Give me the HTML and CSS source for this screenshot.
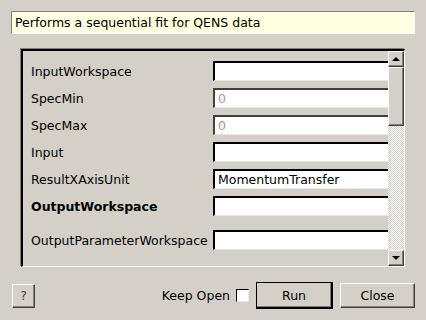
FILE: index.html
```html
<!DOCTYPE html>
<html lang="en">
<head>
    <meta charset="UTF-8">
    <title>PlotPeakByLogValue</title>
    <link rel="stylesheet" href="styles.css">
</head>
<body>
    <div class="dialog">
        <div class="description">Performs a sequential fit for QENS data</div>
        <div class="frame">
            <div class="props">
                <div class="row">
                    <span class="name">InputWorkspace</span>
                    <input class="field" type="text" value="">
                </div>
                <div class="row">
                    <span class="name">SpecMin</span>
                    <input class="field" type="text" value="0" disabled>
                </div>
                <div class="row">
                    <span class="name">SpecMax</span>
                    <input class="field" type="text" value="0" disabled>
                </div>
                <div class="row">
                    <span class="name">Input</span>
                    <input class="field" type="text" value="">
                </div>
                <div class="row">
                    <span class="name">ResultXAxisUnit</span>
                    <input class="field" type="text" value="MomentumTransfer">
                </div>
                <div class="row row-mandatory">
                    <span class="name bold">OutputWorkspace</span>
                    <input class="field" type="text" value="">
                </div>
                <div class="row row-last">
                    <span class="name">OutputParameterWorkspace</span>
                    <input class="field" type="text" value="">
                </div>
            </div>
            <div class="scrollbar">
                <div class="arrow arrow-up"></div>
                <div class="thumb"></div>
                <div class="track"></div>
                <div class="arrow arrow-down"></div>
            </div>
        </div>
        <div class="buttons">
            <button type="button" class="btn help">?</button>
            <label class="keep-open">
                <span>Keep Open</span>
                <span class="check"></span>
            </label>
            <button type="button" class="btn run">Run</button>
            <button type="button" class="btn close">Close</button>
        </div>
    </div>
</body>
</html>
```

FILE: styles.css
```css
body, html {
    margin: 0;
    background-color: #d4d0c8;
    font-family: "DejaVu Sans", sans-serif;
    font-size: 12.5px;
    color: #000;
}
.dialog {
    width: 426px;
    height: 320px;
    padding-top: 11px;
    box-sizing: border-box;
}
.description {
    margin-left: 11px;
    width: 404px;
    height: 23px;
    box-sizing: border-box;
    background-color: #ffffe1;
    border-top: 1px solid #808080;
    border-left: 1px solid #808080;
    border-bottom: 1px solid #fff;
    border-right: 1px solid #fff;
    padding-left: 3px;
    line-height: 21px;
}
.frame {
    display: flex;
    margin-left: 21px;
    margin-top: 15px;
    width: 384px;
    height: 218px;
    box-sizing: border-box;
    border-top: 2px solid #000;
    border-left: 2px solid #000;
    border-bottom: 1px solid #fff;
    border-right: 1px solid #fff;
    box-shadow: -1px -1px 0 #808080;
}
.props {
    flex: 1;
    overflow: hidden;
    padding: 10px 0 0 8px;
}
.row {
    display: flex;
    align-items: center;
    height: 20px;
    margin-bottom: 7px;
}
.row-mandatory {
    margin-top: 2px;
    margin-bottom: 14px;
}
.row-last {
    margin-top: 1px;
}
.name {
    width: 182px;
    flex-shrink: 0;
}
.bold {
    font-weight: bold;
}
.field {
    flex-shrink: 0;
    width: 190px;
    height: 20px;
    box-sizing: border-box;
    margin: 0;
    padding: 0 3px;
    font-family: "DejaVu Sans", sans-serif;
    font-size: 12.5px;
    color: #000;
    background-color: #fff;
    border-style: solid;
    border-width: 2px 0 1px 2px;
    border-color: #000 #e8e6e0 #e8e6e0 #000;
    outline: none;
}
.field:disabled {
    color: #9a9a9a;
    border-color: #404040 #e8e6e0 #e8e6e0 #404040;
}
.scrollbar {
    width: 16px;
    display: flex;
    flex-direction: column;
}
.arrow {
    height: 16px;
    box-sizing: border-box;
    border-top: 1px solid #fff;
    border-left: 1px solid #fff;
    border-bottom: 1px solid #404040;
    border-right: 1px solid #404040;
    box-shadow: inset -1px -1px 0 #808080;
    background-color: #d4d0c8;
    display: flex;
    align-items: center;
    justify-content: center;
}
.arrow::before {
    content: "";
    width: 0;
    height: 0;
    border-left: 4px solid transparent;
    border-right: 4px solid transparent;
}
.arrow-up::before {
    border-bottom: 4px solid #000;
}
.arrow-down::before {
    border-top: 4px solid #000;
}
.thumb {
    height: 59px;
    box-sizing: border-box;
    background-color: #d4d0c8;
    border-top: 1px solid #fff;
    border-left: 1px solid #fff;
    border-bottom: 1px solid #404040;
    border-right: 1px solid #404040;
    box-shadow: inset -1px -1px 0 #808080;
}
.track {
    flex: 1;
    background: repeating-conic-gradient(#fff 0 25%, #d4d0c8 0 50%) 0 0 / 2px 2px;
}
.buttons {
    display: flex;
    align-items: center;
    margin-top: 15px;
    padding: 0 11px 0 12px;
}
.btn {
    font-family: "DejaVu Sans", sans-serif;
    font-size: 12.5px;
    color: #000;
    background-color: #d4d0c8;
    margin: 0;
    padding: 0;
    box-sizing: border-box;
    border-top: 1px solid #fff;
    border-left: 1px solid #fff;
    border-bottom: 1px solid #404040;
    border-right: 1px solid #404040;
    box-shadow: inset -1px -1px 0 #808080;
}
.help {
    width: 23px;
    height: 24px;
    color: #444;
}
.keep-open {
    margin-left: auto;
    display: flex;
    align-items: center;
}
.check {
    width: 13px;
    height: 13px;
    box-sizing: border-box;
    margin-left: 6px;
    background-color: #fff;
    border-top: 1px solid #000;
    border-left: 1px solid #000;
    border-bottom: 1px solid #e8e6e0;
    border-right: 1px solid #e8e6e0;
}
.run {
    width: 77px;
    height: 27px;
    margin-left: 7px;
    outline: 1px solid #000;
    outline-offset: -1px;
    border-bottom: 2px solid #000;
    border-right: 2px solid #000;
}
.close {
    width: 75px;
    height: 25px;
    margin-left: 7px;
}
```
